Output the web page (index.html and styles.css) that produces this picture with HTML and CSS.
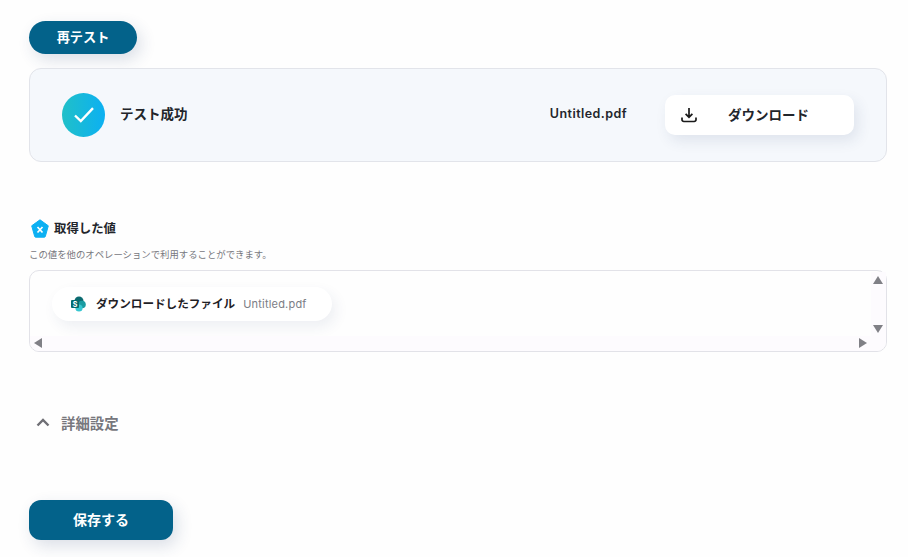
FILE: index.html
```html
<!DOCTYPE html>
<html lang="ja">
<head>
<meta charset="utf-8">
<title>テスト結果</title>
<link rel="stylesheet" href="styles.css">
</head>
<body>
<main class="page">
  <button class="btn btn-retest">再テスト</button>
  <section class="result">
    <div class="check">
      <svg width="20" height="16" viewBox="0 0 20 16"><path d="M1 8.500 L6.800 14 L19 1.200" fill="none" stroke="#fff" stroke-width="2.400"/></svg>
    </div>
    <div class="result-label">テスト成功</div>
    <div class="result-file">Untitled.pdf</div>
    <button class="download">
      <svg class="download-icon" width="16" height="16" viewBox="0 0 16 16"><path d="M8 1v9M4.600 6.800 8 10.200l3.400-3.400M1 10.500v2.200A1.800 1.800 0 0 0 2.800 14.500h10.400A1.800 1.800 0 0 0 15 12.700v-2.200" fill="none" stroke="#1a1a1a" stroke-width="1.700"/></svg>
      <span class="download-text">ダウンロード</span>
    </button>
  </section>
  <section class="values">
    <h2 class="values-title">
      <svg width="18" height="19" viewBox="0 0 18 19"><path d="M9 .8 17.300 6.800 14.300 17.500a1 1 0 0 1-1 .7H4.700a1 1 0 0 1-1-.7L.7 6.800z" fill="#0cb0f2" stroke="#0cb0f2" stroke-linejoin="round"/><path d="M6.500 8 11.500 13.500M11.500 8 6.500 13.500" stroke="#fff" stroke-width="1.700"/></svg>
      <span>取得した値</span>
    </h2>
    <p class="values-note">この値を他のオペレーションで利用することができます。</p>
    <div class="panel">
      <div class="chip">
        <svg width="15" height="16" viewBox="0 0 15 16"><circle cx="8" cy="5" r="4.500" fill="#0b6a70"/><circle cx="11" cy="8.500" r="3.800" fill="#1a9ba1"/><circle cx="8" cy="12" r="3.600" fill="#37c6d0"/><rect x="0" y="4" width="8" height="8" rx="1" fill="#036c70"/><text x="4" y="10.500" class="chip-s">S</text></svg>
        <span class="chip-label">ダウンロードしたファイル</span>
        <span class="chip-value">Untitled.pdf</span>
      </div>
      <div class="track track-v"></div>
      <div class="track track-h"></div>
      <i class="arrow arrow-up"></i>
      <i class="arrow arrow-down"></i>
      <i class="arrow arrow-left"></i>
      <i class="arrow arrow-right"></i>
    </div>
  </section>
  <div class="details">
    <svg width="14" height="9" viewBox="0 0 14 9"><path d="M1.500 7.500 7 2l5.500 5.500" fill="none" stroke="#6f6f75" stroke-width="2.400"/></svg>
    <span>詳細設定</span>
  </div>
  <button class="btn btn-save">保存する</button>
</main>
</body>
</html>
```

FILE: styles.css
```css
* { box-sizing: border-box; }
html, body { margin: 0; height: 100%; }
body {
  background: #fefefe;
  color: #22252b;
  font-family: Inter, "Noto Sans CJK JP", sans-serif;
  overflow: hidden;
}
.page {
  display: flex;
  flex-direction: column;
  align-items: flex-start;
  padding: 21px 21px 0 29px;
}
.btn {
  border: 0;
  background: #03628a;
  color: #fff;
  font: 700 14px Inter, "Noto Sans CJK JP", sans-serif;
  box-shadow: 4px 6px 16px rgba(40, 60, 110, .16);
}
.btn-retest {
  width: 108px;
  height: 33px;
  border-radius: 17px;
  padding: 0 0 2px;
  font-size: 13.2px;
}
.result {
  width: 858px;
  height: 94px;
  margin-top: 14px;
  display: flex;
  align-items: center;
  padding: 0 32px;
  background: #f5f8fc;
  border: 1px solid #e2e4ea;
  border-radius: 12px;
}
.check {
  width: 43px;
  height: 44px;
  flex: none;
  border-radius: 50%;
  display: flex;
  align-items: center;
  justify-content: center;
  background: linear-gradient(90deg, #20c0c8, #0cb0f2);
}
.result-label {
  margin-left: 15px;
  padding-bottom: 5px;
  font-size: 13.5px;
  font-weight: 600;
  flex: 1;
}
.result-file {
  font-size: 12.5px;
  font-weight: 600;
  letter-spacing: .44px;
  margin-right: 38px;
  padding-bottom: 3px;
}
.download {
  width: 189px;
  height: 40px;
  display: flex;
  align-items: center;
  padding: 0 0 0 16px;
  border: 0;
  border-radius: 10px;
  background: #fff;
  color: #22252b;
  font: 600 13.5px Inter, "Noto Sans CJK JP", sans-serif;
  box-shadow: 4px 6px 14px rgba(40, 60, 110, .10);
}
.download-text { margin-left: 31px; padding-bottom: 3px; }
.values { width: 858px; margin-top: 56px; }
.values-title {
  display: flex;
  align-items: center;
  gap: 5px;
  margin: 0 0 0 2px;
  height: 20px;
  font-size: 12.4px;
  font-weight: 600;
}
.values-note {
  margin: 10px 0 0;
  height: 14px;
  line-height: 14px;
  font-size: 9.4px;
  color: #77777d;
}
.panel {
  position: relative;
  height: 82px;
  margin-top: 8px;
  padding: 16px 0 0 22px;
  background: #fefefe;
  border: 1px solid #e2e2e8;
  border-radius: 10px;
}
.chip {
  display: inline-flex;
  align-items: center;
  height: 34px;
  width: 280px;
  padding-left: 19px;
  background: #fff;
  border-radius: 17px;
  box-shadow: 4px 6px 14px rgba(40, 60, 110, .08);
}
.chip-s {
  font: 700 7px Inter, sans-serif;
  fill: #fff;
  text-anchor: middle;
}
.chip-label {
  margin-left: 10px;
  padding-bottom: 3px;
  font-size: 11.6px;
  font-weight: 600;
  color: #1f2126;
}
.chip-value {
  margin-left: 8px;
  padding-bottom: 1px;
  font-size: 11px;
  color: #7b7d85;
  letter-spacing: .2px;
}
.track {
  position: absolute;
  background: #fdfbfe;
}
.track-v { right: 0; top: 1px; bottom: 15px; width: 15px; }
.track-h { left: 0; right: 0; bottom: 0; height: 15px; border-radius: 0 0 9px 9px; }
.arrow {
  position: absolute;
  width: 0;
  height: 0;
  border: 5px solid transparent;
}
.arrow-up { right: 3px; top: 5px; border-bottom-color: #808086; border-top-width: 0; border-bottom-width: 8px; }
.arrow-down { right: 3px; top: 54px; border-top-color: #808086; border-bottom-width: 0; border-top-width: 8px; }
.arrow-left { left: 4px; bottom: 3px; border-right-color: #808086; border-left-width: 0; border-right-width: 8px; }
.arrow-right { right: 19px; bottom: 3px; border-left-color: #808086; border-right-width: 0; border-left-width: 8px; }
.details {
  display: flex;
  align-items: center;
  gap: 11px;
  margin: 60px 0 0 7px;
  height: 20px;
  font-size: 14.4px;
  font-weight: 600;
  color: #77777d;
}
.btn-save {
  width: 144px;
  height: 40px;
  margin-top: 68px;
  border-radius: 12px;
  padding-bottom: 4px;
}
```
